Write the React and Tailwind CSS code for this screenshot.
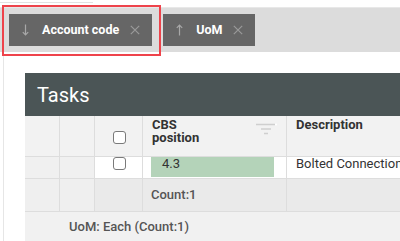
import React from 'react';

const ArrowDown = () => (
  <svg width="7" height="12" viewBox="0 0 7 12" className="shrink-0">
    <path d="M3.5 0.5 V11 M0.8 8.2 L3.5 11 L6.2 8.2" stroke="#a8a8a8" strokeWidth="1.2" fill="none" />
  </svg>
);

const ArrowUp = () => (
  <svg width="7" height="12" viewBox="0 0 7 12" className="shrink-0">
    <path d="M3.5 11.5 V1 M0.8 3.8 L3.5 1 L6.2 3.8" stroke="#a8a8a8" strokeWidth="1.2" fill="none" />
  </svg>
);

const Close = () => (
  <svg width="10" height="10" viewBox="0 0 10 10" className="shrink-0">
    <path d="M0.8 0.8 L9.2 9.2 M9.2 0.8 L0.8 9.2" stroke="#9a9a9a" strokeWidth="1.2" fill="none" />
  </svg>
);

const FilterIcon = () => (
  <svg width="21" height="13" viewBox="0 0 21 13">
    <path d="M0 1.5 H19 M5 6 H15 M8 10.5 H12" stroke="#cfcfcf" strokeWidth="1.6" fill="none" />
    <circle cx="20" cy="1.5" r="1" fill="#ffffff" />
  </svg>
);

const Checkbox = () => (
  <div className="w-[13px] h-[13px] rounded-[3px] border border-[#7a7a7a] bg-white" />
);

const Chip = ({ label, up }) => (
  <div className="h-[32px] bg-[#666666] flex items-center pl-[13px] pr-[12px]">
    {up ? <ArrowUp /> : <ArrowDown />}
    <span className="ml-[13px] text-white font-bold text-[12.5px]">{label}</span>
    <span className="ml-[11px]"><Close /></span>
  </div>
);

export default function App() {
  return (
    <div className="relative w-[400px] h-[241px] overflow-hidden bg-white text-[#333] font-['Roboto',sans-serif]">
      <div className="h-[7px]">
        <div className="w-[93px] h-[3px] border-b border-[#e2e2e2]" />
      </div>

      <div className="h-[45px] bg-[#dcdcdc] border-t border-[#e8e8e8] flex items-start gap-[11px] pl-[9px] pt-[6px]">
        <Chip label="Account code" />
        <Chip label="UoM" up />
      </div>

      <div className="absolute left-[2px] top-[5px] w-[159px] h-[51px] border-2 border-[#ee434b]" />

      <div className="ml-[3px] border-l border-[#e6e6e6] pl-[21px] pt-[21px] h-[189px]">
        <div className="w-[400px] overflow-hidden">
          <div className="h-[43px] bg-[#4b5556] flex items-center pl-[12px]">
            <span className="text-white text-[20px] leading-none">Tasks</span>
          </div>

          <div className="grid grid-cols-[35px_35px_48px_144px_200px] text-[13px]">
            {/* header */}
            <div className="h-[41px] bg-[#f2f2f2] border-r border-b border-[#dddddd]" />
            <div className="h-[41px] bg-[#f2f2f2] border-r border-b border-[#dddddd]" />
            <div className="h-[41px] bg-[#f2f2f2] border-r border-b border-[#dddddd] flex justify-center pt-[15px] pl-[2px]">
              <Checkbox />
            </div>
            <div className="h-[41px] bg-[#f2f2f2] border-r border-b border-[#dddddd] flex justify-between pl-[9px] pr-[9px] pt-[2px]">
              <span className="font-bold leading-[13px] text-[#333]">CBS<br />position</span>
              <span className="pt-[5px]"><FilterIcon /></span>
            </div>
            <div className="h-[41px] bg-[#f2f2f2] border-b border-[#dddddd] pl-[9px] pt-[2px] font-bold leading-[13px]">
              Description
            </div>

            {/* data row */}
            <div className="h-[22px] bg-[#f0f0f0] border-r border-b border-[#dddddd]" />
            <div className="h-[22px] bg-[#f0f0f0] border-r border-b border-[#dddddd]" />
            <div className="h-[22px] bg-white border-r border-b border-[#dddddd] flex justify-center pl-[2px]">
              <Checkbox />
            </div>
            <div className="h-[22px] bg-white border-r border-b border-[#dddddd] pl-[8px] pr-[12px]">
              <div className="h-[20px] bg-[#b4d3b9] pl-[11px] leading-[13px] text-[#333]">4.3</div>
            </div>
            <div className="h-[22px] bg-white border-b border-[#dddddd] pl-[9px] leading-[13px] whitespace-nowrap">
              Bolted Connection
            </div>

            {/* count row */}
            <div className="h-[33px] bg-[#efefef] border-r border-b border-[#dddddd]" />
            <div className="h-[33px] bg-[#efefef] border-r border-b border-[#dddddd]" />
            <div className="h-[33px] bg-[#eaeaea] border-r border-b border-[#dddddd]" />
            <div className="h-[33px] bg-[#eaeaea] border-r border-b border-[#dddddd] pl-[8px] flex items-center font-medium text-[#555]">
              Count:1
            </div>
            <div className="h-[33px] bg-[#eaeaea] border-b border-[#dddddd]" />

            {/* group footer */}
            <div className="col-span-5 h-[30px] bg-[#f1f1f1] pl-[44px] flex items-center font-medium text-[#555]">
              UoM: Each (Count:1)
            </div>
          </div>
        </div>
      </div>
    </div>
  );
}
